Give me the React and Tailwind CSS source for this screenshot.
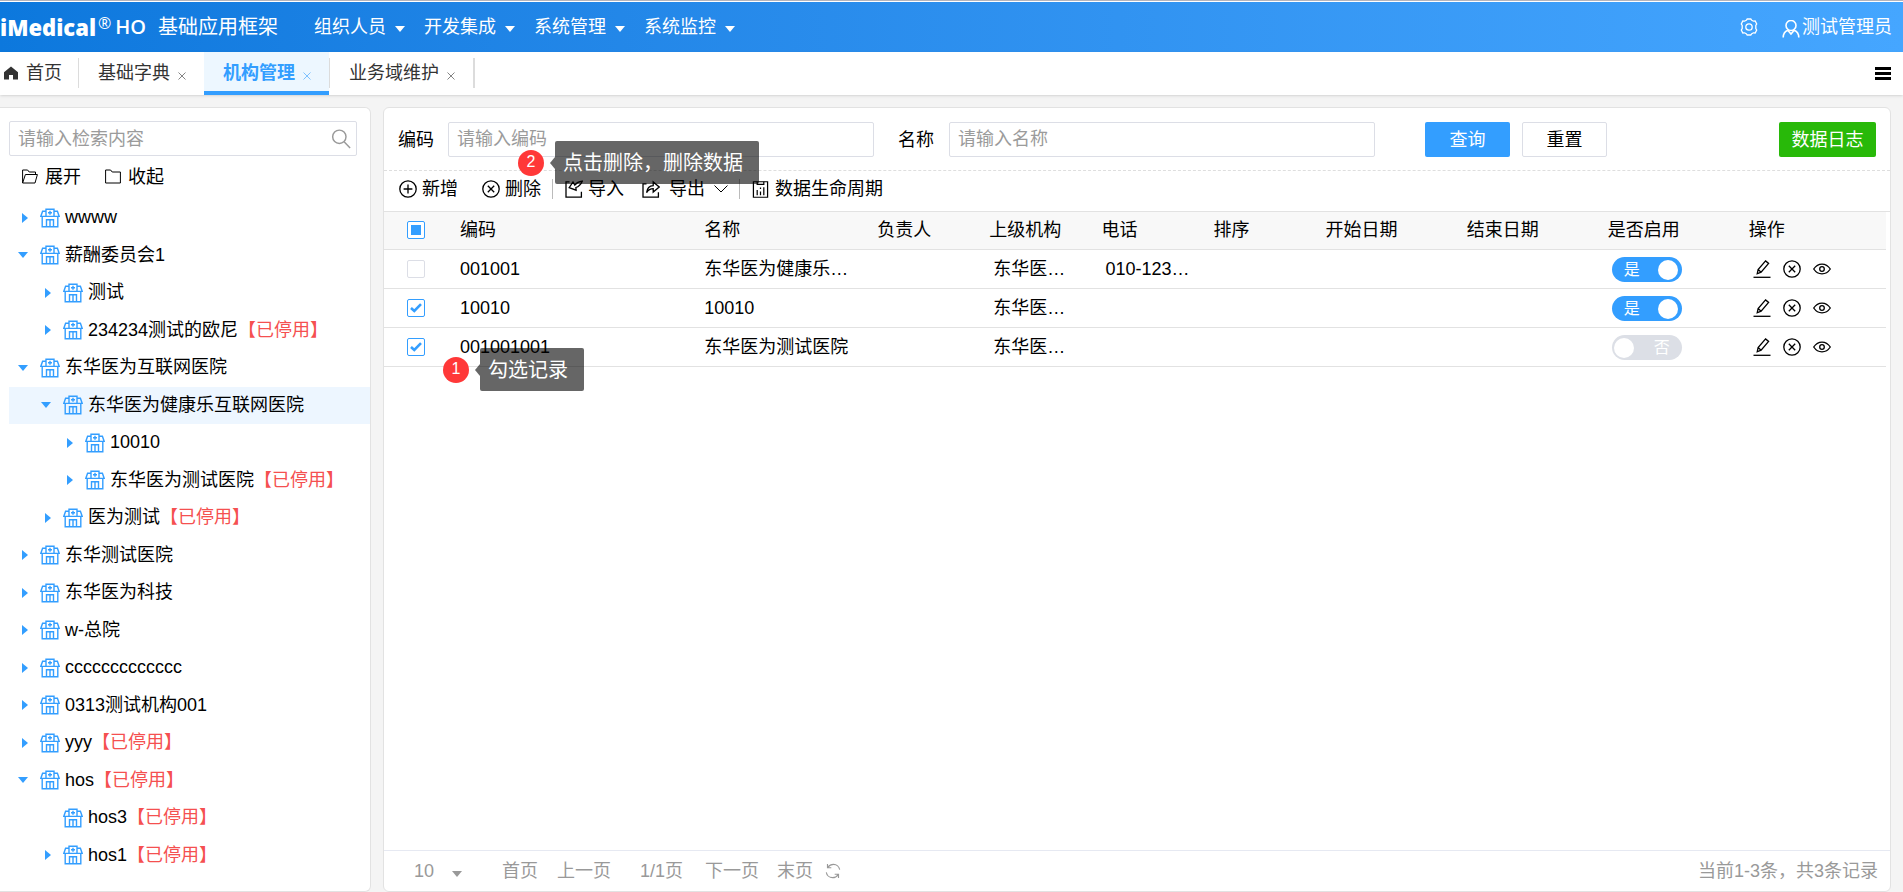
import React, { useState } from "react";

const FONT =
  "font-['Liberation_Sans','Noto_Sans_CJK_SC',sans-serif]";

const menus = ["组织人员", "开发集成", "系统管理", "系统监控"];

const tabs = [
  { name: "基础字典" },
  { name: "机构管理", active: true },
  { name: "业务域维护" },
];

// level: depth in the tree, open: true / false / null (leaf)
const nodes = [
  { name: "wwww", level: 0, open: false },
  { name: "薪酬委员会1", level: 0, open: true },
  { name: "测试", level: 1, open: false },
  { name: "234234测试的欧尼", level: 1, open: false, stopped: true },
  { name: "东华医为互联网医院", level: 0, open: true },
  { name: "东华医为健康乐互联网医院", level: 1, open: true },
  { name: "10010", level: 2, open: false },
  { name: "东华医为测试医院", level: 2, open: false, stopped: true },
  { name: "医为测试", level: 1, open: false, stopped: true },
  { name: "东华测试医院", level: 0, open: false },
  { name: "东华医为科技", level: 0, open: false },
  { name: "w-总院", level: 0, open: false },
  { name: "ccccccccccccc", level: 0, open: false },
  { name: "0313测试机构001", level: 0, open: false },
  { name: "yyy", level: 0, open: false, stopped: true },
  { name: "hos", level: 0, open: true, stopped: true },
  { name: "hos3", level: 1, open: null, stopped: true },
  { name: "hos1", level: 1, open: false, stopped: true },
];

const indents = ["pl-[9px]", "pl-8", "pl-[54px]"];

const columns = [
  { title: "编码", width: "w-[244px]" },
  { title: "名称", width: "w-[173px]" },
  { title: "负责人", width: "w-[112px]" },
  { title: "上级机构", width: "w-[112px]" },
  { title: "电话", width: "w-[112px]" },
  { title: "排序", width: "w-[112px]" },
  { title: "开始日期", width: "w-[141px]" },
  { title: "结束日期", width: "w-[141px]" },
  { title: "是否启用", width: "w-[141px]" },
  { title: "操作", width: "w-[145px]" },
];

const initialRows = [
  {
    code: "001001",
    name: "东华医为健康乐…",
    parent: "东华医…",
    phone: "010-123…",
    checked: false,
    enabled: true,
  },
  {
    code: "10010",
    name: "10010",
    parent: "东华医…",
    phone: "",
    checked: true,
    enabled: true,
  },
  {
    code: "001001001",
    name: "东华医为测试医院",
    parent: "东华医…",
    phone: "",
    checked: true,
    enabled: false,
  },
];

/* ---------- icons ---------- */

const Svg = ({ size = "h-[18px] w-[18px]", className = "", children }) => (
  <svg
    viewBox="0 0 18 18"
    fill="none"
    stroke="currentColor"
    strokeWidth="1.3"
    className={`${size} shrink-0 ${className}`}
    aria-hidden="true"
  >
    {children}
  </svg>
);

const HospitalIcon = () => (
  <svg
    viewBox="0 0 20 20"
    fill="none"
    stroke="currentColor"
    strokeWidth="1.4"
    className="h-5 w-5 shrink-0 text-[#339eff]"
    aria-hidden="true"
  >
    <path d="M6 8.2V1.2h8v7M6 3.2H2.6L.8 8.4h18.4l-1.8-5.2H14M2.2 8.6v10.2h15.6V8.6M6.500 18.8v-7h7v7M10 11.8v7" />
    <path d="M10 2.8v4M8 4.8h4" />
  </svg>
);

const CloseCircleIcon = () => (
  <Svg>
    <circle cx="9" cy="9" r="8.2" />
    <path d="M5.8 5.8l6.4 6.4M12.2 5.8l-6.4 6.4" />
  </Svg>
);

const PlusCircleIcon = () => (
  <Svg>
    <circle cx="9" cy="9" r="8.2" />
    <path d="M9 4.6v8.8M4.6 9h8.8" />
  </Svg>
);

const EditIcon = () => (
  <Svg>
    <path d="M.5 17.3h17" />
    <path d="M4.2 13.8l.9-4.2L12.6.9l3 2.5-7.5 8.8zM5.1 9.6l3 2.6" />
  </Svg>
);

const EyeIcon = () => (
  <Svg>
    <path d="M.7 9C3 5.6 5.9 4.1 9 4.1S15 5.6 17.3 9C15 12.4 12.1 13.9 9 13.9S3 12.4.7 9z" />
    <circle cx="9" cy="9" r="2.3" />
  </Svg>
);

const ImportIcon = () => (
  <Svg>
    <path d="M4.5 1.8H1v15.4h15.4v-5.5" />
    <path d="M17.3 1.2C14 1.6 11.500 2.800 9.800 5L8 2 4.200 7.600l6.900 2.600-.2-2.700C13.800 6.600 15.800 4.500 17.300 1.200z" />
  </Svg>
);

const ExportIcon = () => (
  <Svg>
    <path d="M4.5 3.8H1v13.4h15.4v-5" />
    <path d="M4.6 12.6c.5-4.2 2.9-6.8 6.6-7V1.9L17.2 7l-6 5V8.7c-2.900 0-4.900 1.200-6.600 3.900z" />
  </Svg>
);

const LifecycleIcon = () => (
  <Svg size="h-[17px] w-[17px]">
    <path d="M1.500.8h15v16.400h-15z" />
    <path d="M5.500.8v2.700h7V.8M5.500 15V9.500M9 15V11M12.500 15V6.500M9 7v1.500" />
  </Svg>
);

const Caret = ({ className = "" }) => (
  <svg
    viewBox="0 0 10 6"
    fill="currentColor"
    className={`h-[6px] w-[10px] shrink-0 ${className}`}
    aria-hidden="true"
  >
    <path d="M0 0h10L5 6z" />
  </svg>
);

/* ---------- header ---------- */

const Header = () => (
  <header className="flex h-[51px] items-center border-t border-white bg-linear-to-r from-[#0c78dd] to-[#45a6ff] pr-[11px] text-white">
    <div className="flex items-center font-['Open_Sans',sans-serif] whitespace-nowrap">
      <span className="text-[22px] leading-8 font-extrabold">iMedical</span>
      <span className="mb-2 ml-[2px] text-base leading-6">®</span>
      <span className="ml-1 text-xl leading-8 font-semibold">HO</span>
    </div>
    <h1 className="ml-3 text-xl leading-6">基础应用框架</h1>
    <nav className="ml-9 flex items-center gap-[19px]">
      {menus.map((menu) => (
        <button key={menu} className="flex items-center gap-[9px] text-lg leading-6">
          {menu}
          <Caret className="mt-1" />
        </button>
      ))}
    </nav>
    <div className="ml-auto flex items-center gap-6">
      <button aria-label="设置">
        <Svg>
          <path d="M6.2 2.3L7.2 1h3.6l1 1.3 1.7.9 1.7-.2 1.5 3-.9 1.5v3l.9 1.5-1.5 3-1.7-.2-1.7.9-1 1.3H7.2l-1-1.3-1.7-.9-1.7.2-1.5-3 .9-1.5v-3L1.3 6l1.5-3 1.7.2z" />
          <circle cx="9" cy="9" r="3.2" />
        </Svg>
      </button>
      <button className="flex items-center gap-[2px] text-lg leading-6">
        <Svg className="mt-1">
          <circle cx="9" cy="5.5" r="5" strokeWidth="1.6" />
          <path d="M1.2 17.5c0-3.5 1.8-6 4.6-7.2L9 14l3.2-3.7c2.8 1.2 4.6 3.7 4.6 7.2" strokeWidth="1.6" />
        </Svg>
        测试管理员
      </button>
    </div>
  </header>
);

const TabBar = () => (
  <div className="relative flex h-[43px] bg-white pr-3 text-lg text-[#333] shadow-sm">
    <button className="flex items-center gap-2 pr-4 pb-px pl-1">
      <svg viewBox="0 0 14 14" fill="currentColor" className="h-[14px] w-[14px]" aria-hidden="true">
        <path d="M7 .4L14 6.2V13.5H9V9H5v4.5H0V6.2z" />
      </svg>
      首页
    </button>
    {tabs.map((tab) => (
      <div
        key={tab.name}
        className={`flex items-stretch border-b-4 ${
          tab.active ? "border-[#339eff] bg-[#edf7ff] text-[#339eff]" : "border-transparent"
        }`}
      >
        <span className={`mt-[6px] h-[30px] bg-[#dcdcdc] ${tab.active ? "w-0" : "w-px"}`} />
        <button className={`pt-[2px] pl-[19px] leading-6 ${tab.active ? "font-bold" : ""}`}>
          {tab.name}
        </button>
        <button aria-label="关闭" className="pt-2 pr-[18px] pl-2">
          <svg viewBox="0 0 8 8" stroke="currentColor" className="h-2 w-2 opacity-60" aria-hidden="true">
            <path d="M.5.5l7 7M7.5.5l-7 7" />
          </svg>
        </button>
      </div>
    ))}
    <span className="mt-[6px] h-[30px] w-[2px] bg-[#dcdcdc]" />
    <button aria-label="菜单" className="ml-auto pb-px text-black">
      <svg viewBox="0 0 16 13" fill="currentColor" className="h-[13px] w-4" aria-hidden="true">
        <path d="M0 0h16v3H0zM0 5h16v3H0zM0 10h16v3H0z" />
      </svg>
    </button>
  </div>
);

/* ---------- left tree ---------- */

const Sidebar = () => {
  const [selected, setSelected] = useState("东华医为健康乐互联网医院");

  return (
    <aside className="flex w-[371px] shrink-0 flex-col rounded-r-md border border-l-0 border-[#e2e2e2] bg-white pt-[13px] pb-[17px] pl-[9px]">
      <div className="mr-[13px] flex h-[35px] items-center rounded-xs border border-[#dcdee6] pr-[5px] pl-2">
        <input
          aria-label="检索"
          placeholder="请输入检索内容"
          className="min-w-0 flex-1 text-lg leading-6 outline-none placeholder:text-[#9b9b9b]"
        />
        <button aria-label="搜索" className="text-[#999]">
          <Svg size="h-5 w-5">
            <circle cx="7.5" cy="7" r="6" />
            <path d="M11.8 11.5l5.4 5.5" />
          </Svg>
        </button>
      </div>
      <div className="mb-[2px] flex h-[41px] items-center gap-6 pl-[13px] text-lg leading-6">
        <button className="flex items-center gap-[7px]">
          <svg viewBox="0 0 16 15" fill="none" stroke="currentColor" className="h-[15px] w-4" aria-hidden="true">
            <path d="M.6 14V1h5l1.600 2H13.500v2.500M.6 14L3.400 5.500H15.400L13 14z" />
          </svg>
          展开
        </button>
        <button className="flex items-center gap-[7px]">
          <svg viewBox="0 0 16 15" fill="none" stroke="currentColor" className="h-[15px] w-4" aria-hidden="true">
            <path d="M.6 14V1h5l1.600 2h8.200v11z" />
          </svg>
          收起
        </button>
      </div>
      <ul className="flex flex-1 flex-col justify-between text-lg leading-[37px]">
        {nodes.map((node) => (
          <li key={node.name} className={selected === node.name ? "bg-[#edf6ff]" : ""}>
            <button
              onClick={() => setSelected(node.name)}
              className={`flex h-[37px] w-full items-center text-left whitespace-nowrap ${indents[node.level]}`}
            >
              <span className="flex w-[22px] shrink-0 text-[#339eff]">
                {node.open === true && <Caret />}
                {node.open === false && (
                  <svg viewBox="0 0 6 10" fill="currentColor" className="ml-1 h-[10px] w-[6px]" aria-hidden="true">
                    <path d="M0 0v10l6-5z" />
                  </svg>
                )}
              </span>
              <HospitalIcon />
              <span className="ml-[5px]">{node.name}</span>
              {node.stopped && <span className="text-[#f55050]">【已停用】</span>}
            </button>
          </li>
        ))}
      </ul>
    </aside>
  );
};

/* ---------- right content ---------- */

const SearchForm = () => (
  <form
    onSubmit={(e) => e.preventDefault()}
    className="flex items-center border-b border-dashed border-[#dedede] px-[14px] pt-[14px] pb-[13px] text-lg leading-6"
  >
    <label htmlFor="code" className="w-[50px] shrink-0">
      编码
    </label>
    <input
      id="code"
      placeholder="请输入编码"
      className="h-[35px] w-[426px] min-w-0 rounded-xs border border-[#dcdee6] px-2 outline-none placeholder:text-[#9b9b9b]"
    />
    <label htmlFor="name" className="ml-6 w-[51px] shrink-0">
      名称
    </label>
    <input
      id="name"
      placeholder="请输入名称"
      className="h-[35px] w-[426px] min-w-0 rounded-xs border border-[#dcdee6] px-2 outline-none placeholder:text-[#9b9b9b]"
    />
    <button type="submit" className="ml-[50px] h-[35px] w-[85px] shrink-0 rounded-xs bg-[#339eff] text-white">
      查询
    </button>
    <button type="reset" className="ml-3 h-[35px] w-[85px] shrink-0 rounded-xs border border-[#dcdee6]">
      重置
    </button>
    <button type="button" className="ml-auto h-[35px] w-[97px] shrink-0 rounded-xs bg-[#28b909] text-white">
      数据日志
    </button>
  </form>
);

const Tip = ({ number, text, className }) => (
  <div className={`absolute z-10 flex items-center whitespace-nowrap ${className}`}>
    <span className="flex h-[26px] w-[26px] items-center justify-center rounded-full bg-[#ff3838] pb-px text-base leading-none text-white">
      {number}
    </span>
    <svg viewBox="0 0 5 12" className="ml-[6px] h-3 w-[5px] fill-black/60" aria-hidden="true">
      <path d="M5 0v12L0 6z" />
    </svg>
    <span className="rounded-xs bg-black/60 pt-[2px] pr-4 pl-2 text-xl leading-[41px] text-white">
      {text}
    </span>
  </div>
);

const Toolbar = () => (
  <div className="relative flex h-[40px] items-center pb-1 pl-[15px] text-lg leading-6">
    <button className="flex items-center gap-[5px]">
      <PlusCircleIcon />
      新增
    </button>
    <button className="ml-6 flex items-center gap-[5px]">
      <CloseCircleIcon />
      删除
    </button>
    <span className="ml-[11px] h-5 w-px bg-[#bbb]" />
    <button className="ml-3 flex items-center gap-[5px]">
      <ImportIcon />
      导入
    </button>
    <button className="ml-[18px] flex items-center gap-[9px]">
      <ExportIcon />
      导出
      <svg viewBox="0 0 14 8" fill="none" stroke="currentColor" className="h-2 w-[14px]" aria-hidden="true">
        <path d="M.5.5L7 7 13.5.5" />
      </svg>
    </button>
    <span className="ml-[11px] h-5 w-px bg-[#bbb]" />
    <button className="ml-3 flex items-center gap-[6px]">
      <LifecycleIcon />
      数据生命周期
    </button>
    <Tip number="2" text="点击删除，删除数据" className="-top-[30px] left-[134px]" />
  </div>
);

const CheckBox = ({ label, checked, partial, onChange }) => (
  <label className="relative ml-[23px] flex h-[18px] w-[18px] items-center justify-center">
    <input
      type="checkbox"
      aria-label={label}
      checked={checked}
      onChange={onChange}
      className={`h-[18px] w-[18px] appearance-none rounded-xs border bg-white ${
        checked || partial ? "border-[#339eff]" : "border-[#dcdee6]"
      }`}
    />
    {partial && <span className="pointer-events-none absolute h-[10px] w-[10px] bg-[#339eff]" />}
    {checked && !partial && (
      <svg
        viewBox="0 0 12 10"
        fill="none"
        stroke="#339eff"
        strokeWidth="2.6"
        className="pointer-events-none absolute h-[10px] w-3"
        aria-hidden="true"
      >
        <path d="M1 5l3.3 3L11 1.2" />
      </svg>
    )}
  </label>
);

const Switch = ({ on, onClick }) => (
  <button
    role="switch"
    aria-checked={on}
    onClick={onClick}
    className={`mt-[2px] ml-1 flex h-[25px] w-[70px] items-center justify-between rounded-full text-base leading-none text-white ${
      on ? "flex-row bg-[#339eff] pr-1 pl-3" : "flex-row-reverse bg-[#dcdfe6] pr-3 pl-[2px]"
    }`}
  >
    <span>{on ? "是" : "否"}</span>
    <span className="h-5 w-5 rounded-full bg-white" />
  </button>
);

const DataTable = () => {
  const [rows, setRows] = useState(initialRows);

  const toggle = (index, key) =>
    setRows((prev) =>
      prev.map((row, i) => (i === index ? { ...row, [key]: !row[key] } : row)),
    );

  const all = rows.every((row) => row.checked);
  const some = rows.some((row) => row.checked);

  return (
    <div className="relative flex-1 border-t border-[#e2e2e2] pr-1">
      <table className="w-full table-fixed text-left text-lg leading-6">
        <thead className="bg-[#f8f8f8]">
          <tr className="h-[37px] border-b border-[#e2e2e2]">
            <th className="w-[68px] p-0">
              <CheckBox
                label="全选"
                checked={all}
                partial={some && !all}
                onChange={() => setRows((prev) => prev.map((row) => ({ ...row, checked: !all })))}
              />
            </th>
            {columns.map((col) => (
              <th key={col.title} className={`${col.width} px-2 py-0 font-normal`}>
                {col.title}
              </th>
            ))}
          </tr>
        </thead>
        <tbody>
          {rows.map((row, i) => (
            <tr key={row.code} className="h-[39px] border-b border-[#e2e2e2]">
              <td>
                <CheckBox label={row.code} checked={row.checked} onChange={() => toggle(i, "checked")} />
              </td>
              <td className="px-2">{row.code}</td>
              <td className="px-2">{row.name}</td>
              <td />
              <td className="px-3">{row.parent}</td>
              <td className="px-3">{row.phone}</td>
              <td />
              <td />
              <td />
              <td className="px-2">
                <Switch on={row.enabled} onClick={() => toggle(i, "enabled")} />
              </td>
              <td className="px-3">
                <div className="flex items-center gap-3">
                  <button aria-label="编辑">
                    <EditIcon />
                  </button>
                  <button aria-label="删除">
                    <CloseCircleIcon />
                  </button>
                  <button aria-label="查看">
                    <EyeIcon />
                  </button>
                </div>
              </td>
            </tr>
          ))}
        </tbody>
      </table>
      <Tip number="1" text="勾选记录" className="top-[136px] left-[59px]" />
    </div>
  );
};

const Pagination = () => (
  <footer className="flex h-[41px] items-center border-t border-[#e6e9f2] pr-3 pl-[30px] text-lg leading-6 text-[#999]">
    <div className="relative flex items-center">
      <select aria-label="每页条数" className="w-12 appearance-none outline-none">
        <option>10</option>
      </select>
      <Caret className="pointer-events-none absolute top-[12px] right-0" />
    </div>
    <button className="ml-10">首页</button>
    <button className="ml-[19px]">上一页</button>
    <span className="ml-[29px]">1/1页</span>
    <button className="ml-[22px]">下一页</button>
    <button className="ml-[18px]">末页</button>
    <button aria-label="刷新" className="ml-3">
      <Svg size="h-4 w-4">
        <path d="M1.5 10.5c.5 3.5 3.5 6 7 6 2.5 0 4.8-1.2 6.2-3.2M16.5 7.5c-.5-3.5-3.5-6-7-6C7 1.5 4.7 2.7 3.3 4.7M2.800 1v4.300h4.300M15.200 17v-4.300h-4.300" />
      </Svg>
    </button>
    <span className="ml-auto">当前1-3条，共3条记录</span>
  </footer>
);

const App = () => {
  return (
    <div className={`flex min-h-screen flex-col border-t border-[#b4b4bc] bg-[#f4f4f4] text-black ${FONT}`}>
      <Header />
      <TabBar />
      <main className="flex flex-1 gap-3 pt-3 pr-3">
        <Sidebar />
        <section className="flex min-w-0 flex-1 flex-col rounded-md border border-[#e2e2e2] bg-white">
          <SearchForm />
          <Toolbar />
          <DataTable />
          <Pagination />
        </section>
      </main>
    </div>
  );
};

export default App;
